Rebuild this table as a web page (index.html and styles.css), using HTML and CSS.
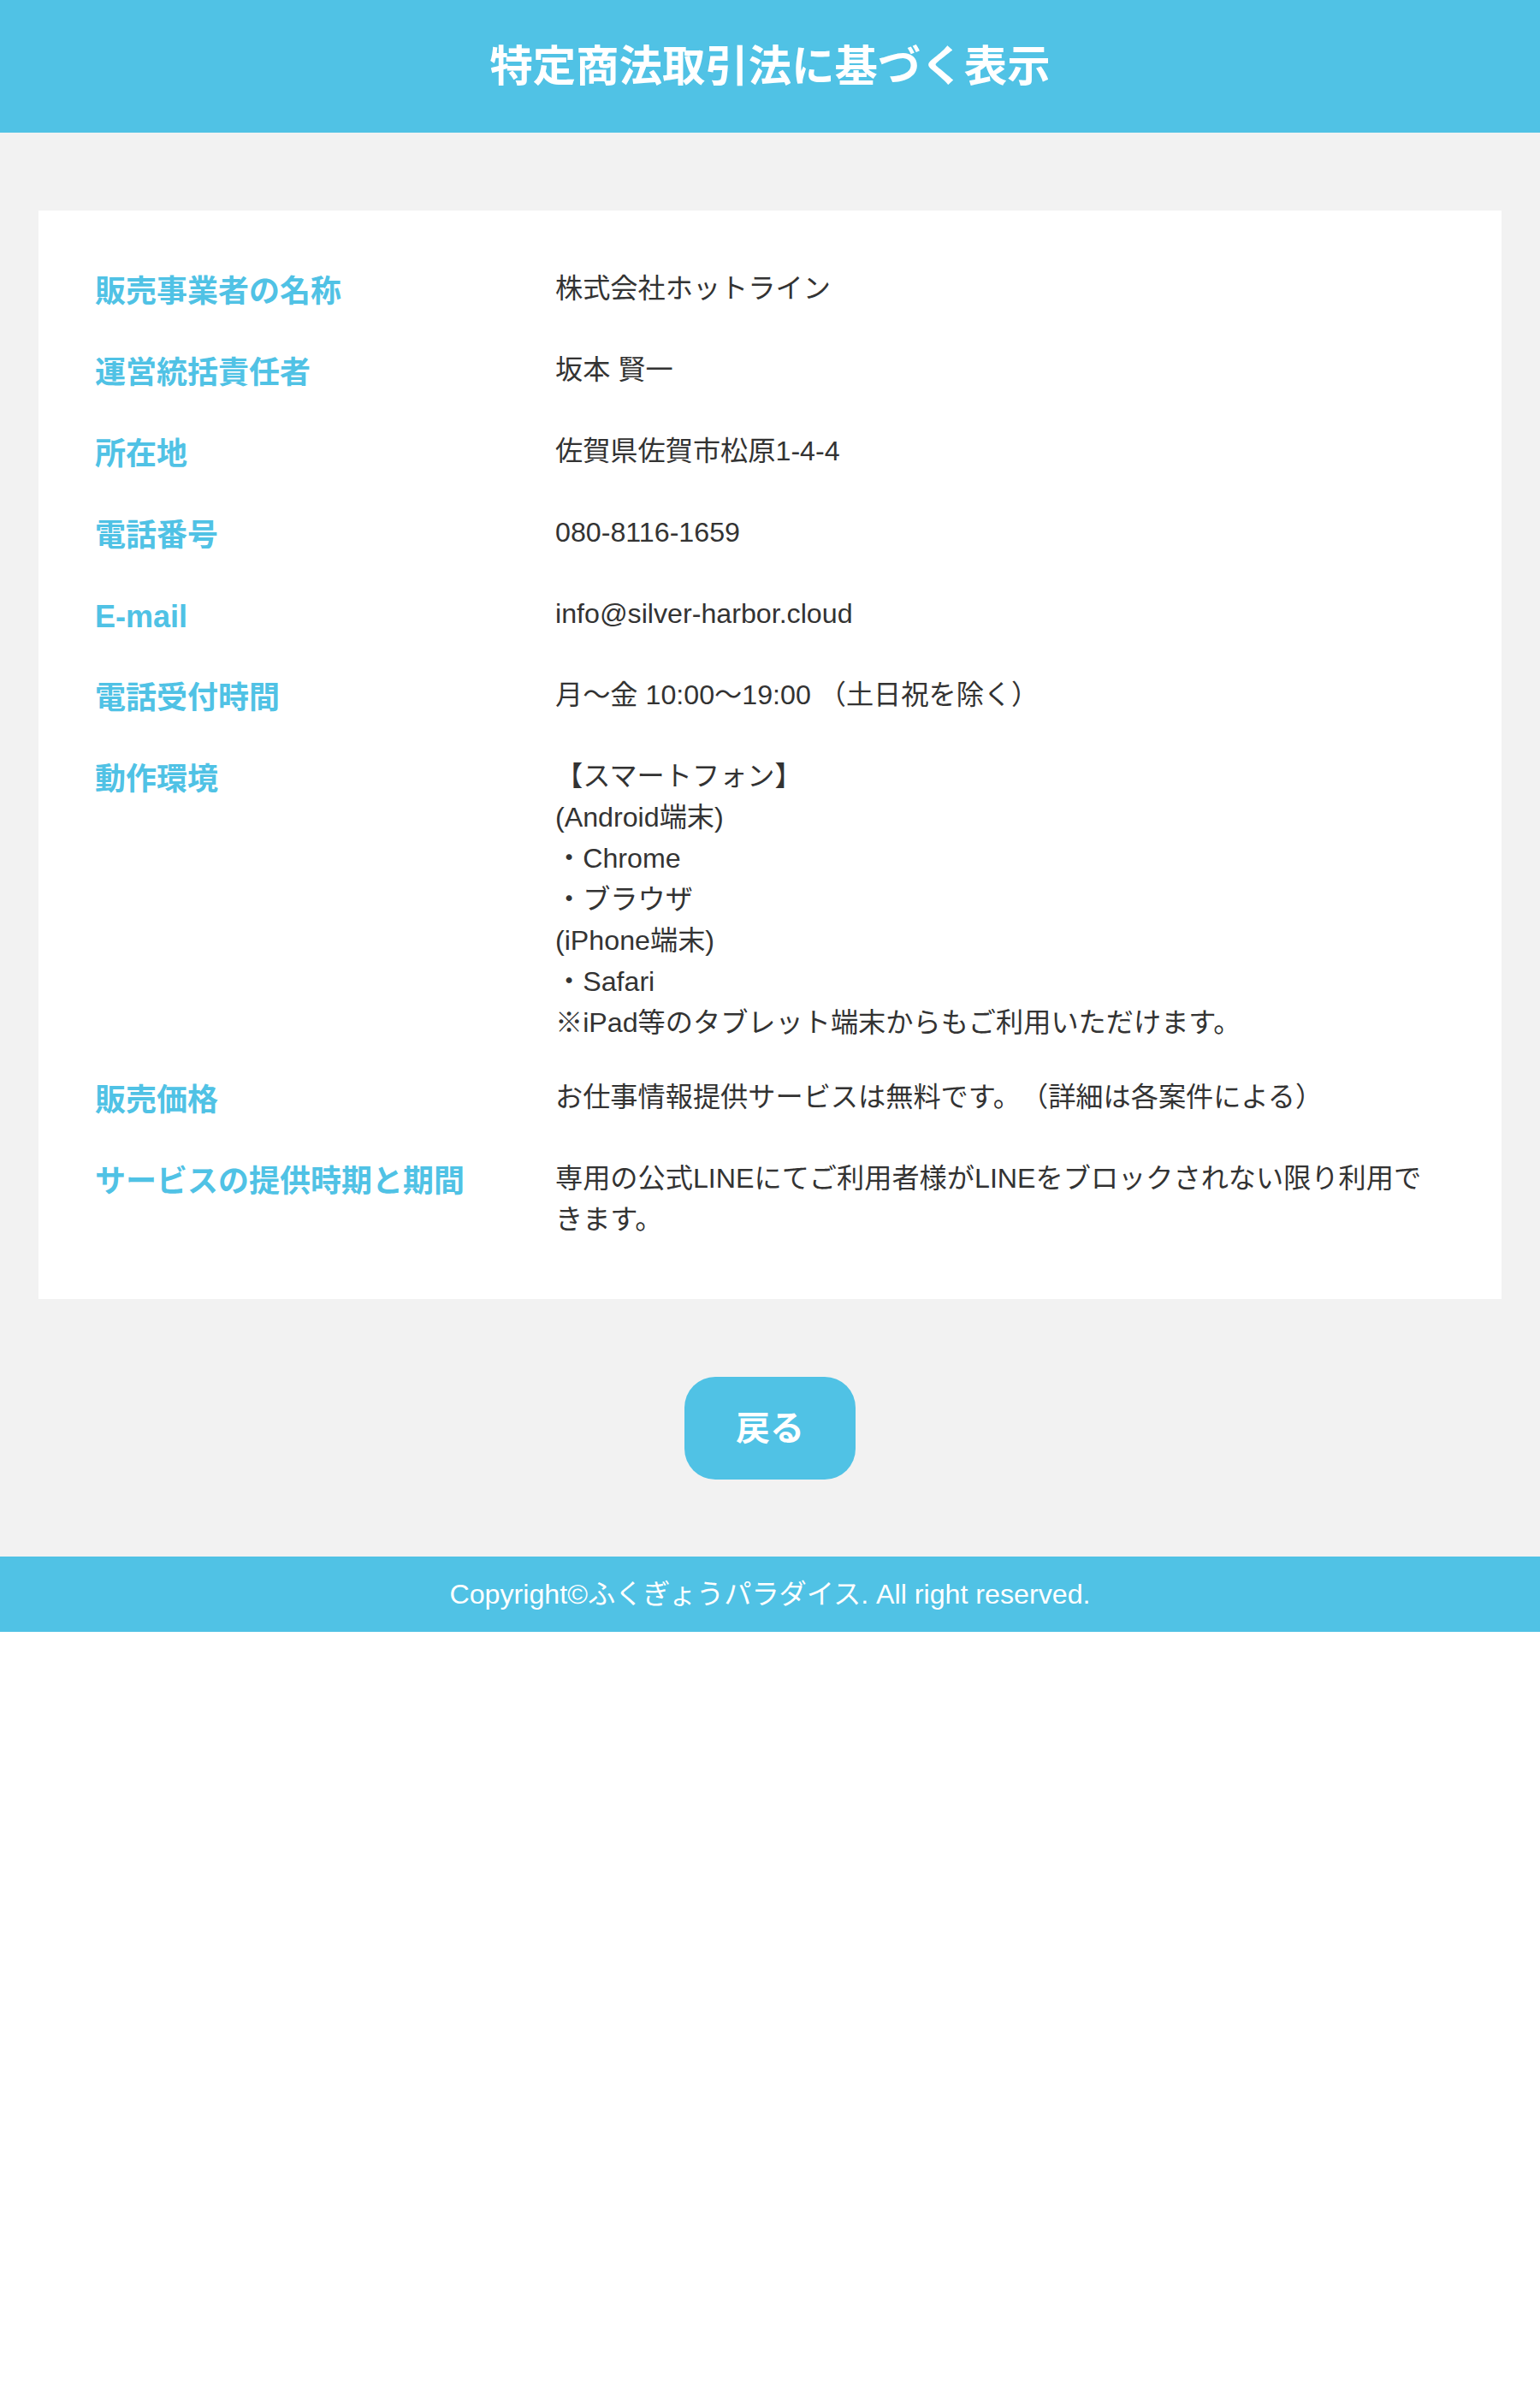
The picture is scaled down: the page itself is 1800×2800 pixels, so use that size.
FILE: index.html
```html
<!DOCTYPE html>
<html lang="ja">
<head>
<meta charset="utf-8">
<title>特定商法取引法に基づく表示</title>
<link rel="stylesheet" href="styles.css">
</head>
<body>
<header class="site-header">
  <h1 class="site-title">特定商法取引法に基づく表示</h1>
</header>
<main class="main">
  <section class="card">
    <dl class="info">
      <dt class="label">販売事業者の名称</dt>
      <dd class="value">株式会社ホットライン</dd>
      <dt class="label">運営統括責任者</dt>
      <dd class="value">坂本 賢一</dd>
      <dt class="label">所在地</dt>
      <dd class="value">佐賀県佐賀市松原1-4-4</dd>
      <dt class="label">電話番号</dt>
      <dd class="value">080-8116-1659</dd>
      <dt class="label">E-mail</dt>
      <dd class="value">info@silver-harbor.cloud</dd>
      <dt class="label">電話受付時間</dt>
      <dd class="value">月〜金 10:00〜19:00 （土日祝を除く）</dd>
      <dt class="label">動作環境</dt>
      <dd class="value">【スマートフォン】<br>(Android端末)<br>・Chrome<br>・ブラウザ<br>(iPhone端末)<br>・Safari<br>※iPad等のタブレット端末からもご利用いただけます。</dd>
      <dt class="label">販売価格</dt>
      <dd class="value">お仕事情報提供サービスは無料です。（詳細は各案件による）</dd>
      <dt class="label">サービスの提供時期と期間</dt>
      <dd class="value">専用の公式LINEにてご利用者様がLINEをブロックされない限り利用できます。</dd>
    </dl>
  </section>
  <div class="actions">
    <a class="back-btn" href="#">戻る</a>
  </div>
</main>
<footer class="site-footer">
  <p class="copyright">Copyright©ふくぎょうパラダイス. All right reserved.</p>
</footer>
</body>
</html>
```

FILE: styles.css
```css
* {
  box-sizing: border-box;
}

html, body {
  margin: 0;
  padding: 0;
  background: #ffffff;
}

body {
  font-family: "Liberation Sans", "Noto Sans CJK JP", sans-serif;
  color: #333333;
  text-spacing-trim: space-all;
  text-autospace: no-autospace;
}

.site-header {
  background: #50c2e5;
  height: 155px;
}

.site-title {
  margin: 0;
  text-align: center;
  color: #ffffff;
  font-size: 50.4px;
  font-weight: 700;
  line-height: 155px;
}

.main {
  background: #f2f2f2;
  padding: 91px 45px 90px;
}

.card {
  background: #ffffff;
  padding: 67px 66px 69px 66px;
}

.info {
  margin: 0;
  display: grid;
  grid-template-columns: 538px 1fr;
  row-gap: 39px;
}

.label {
  margin: 0;
  color: #50c2e5;
  font-size: 36px;
  font-weight: 700;
  line-height: 56px;
}

.value {
  margin: 0;
  font-size: 32.2px;
  line-height: 48px;
  color: #333333;
}

.actions {
  display: flex;
  justify-content: center;
  padding-top: 91px;
}

.back-btn {
  display: block;
  width: 200px;
  height: 120px;
  border-radius: 36px;
  background: #50c2e5;
  color: #ffffff;
  text-decoration: none;
  text-align: center;
  font-size: 40px;
  font-weight: 700;
  line-height: 120px;
}

.site-footer {
  background: #50c2e5;
  padding: 20px 0;
}

.copyright {
  margin: 0;
  text-align: center;
  color: #ffffff;
  font-size: 32.2px;
  line-height: 48px;
}
```
